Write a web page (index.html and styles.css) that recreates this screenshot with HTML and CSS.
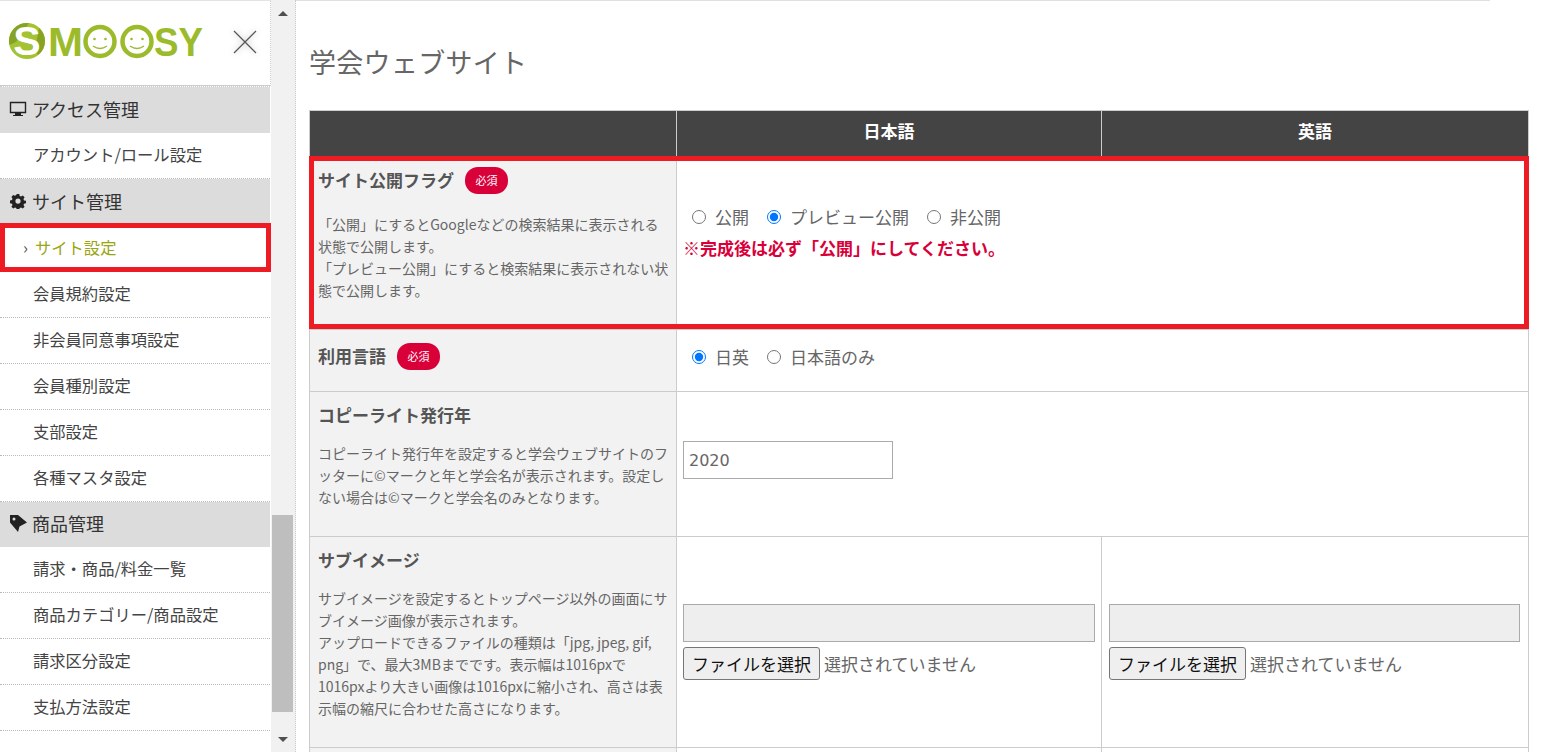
FILE: index.html
```html
<!DOCTYPE html>
<html lang="ja">
<head>
<meta charset="utf-8">
<title>学会ウェブサイト</title>
<link rel="stylesheet" href="styles.css">
</head>
<body>
<div class="app">
  <aside class="sidebar">
    <div class="brand">
      <svg class="logo" width="196" height="44" viewBox="0 0 196 44">
        <circle cx="19" cy="21" r="18" fill="#a3c332"/>
        <path d="M1.500 25 A18 18 0 0 1 21 3 L8 22Z" fill="#86a324"/>
        <path d="M30 35 A18 18 0 0 0 37 21 A18 18 0 0 0 31 8 L27 30Z" fill="#86a324"/>
        <text x="19" y="35" text-anchor="middle" class="logo-s">S</text>
        <text x="40" y="36" class="logo-t" textLength="35" lengthAdjust="spacingAndGlyphs">M</text>
        <circle cx="92" cy="21.500" r="14.500" fill="none" stroke="#9bbb2b" stroke-width="4.500"/>
        <circle cx="86.500" cy="19" r="1.300" fill="#9bbb2b"/><circle cx="97.500" cy="19" r="1.300" fill="#9bbb2b"/>
        <path d="M85 26 Q92 31 99 26" fill="none" stroke="#9bbb2b" stroke-width="1.300"/>
        <circle cx="129" cy="21.500" r="14.500" fill="none" stroke="#9bbb2b" stroke-width="4.500"/>
        <circle cx="123.500" cy="19" r="1.300" fill="#9bbb2b"/><circle cx="134.500" cy="19" r="1.300" fill="#9bbb2b"/>
        <path d="M122 26 Q129 31 136 26" fill="none" stroke="#9bbb2b" stroke-width="1.300"/>
        <text x="146" y="36" class="logo-t" textLength="49" lengthAdjust="spacingAndGlyphs">SY</text>
      </svg>
      <svg class="close" width="24" height="24" viewBox="0 0 24 24"><path d="M1 1L23 23M23 1L1 23" stroke="#555" stroke-width="1.200" fill="none"/></svg>
    </div>
    <nav class="nav">
      <div class="nav-head">
        <svg class="nav-icon" width="18" height="16" viewBox="0 0 18 16"><path d="M1.500 1.500H16.500V11.500H1.500Z" fill="none" stroke="#222" stroke-width="1.400"/><path d="M6 11.500H12V14H14V15H4V14H6Z" fill="#222"/></svg>
        アクセス管理
      </div>
      <a class="nav-item">アカウント/ロール設定</a>
      <div class="nav-head">
        <svg class="nav-icon" width="18" height="16" viewBox="0 0 16 16"><path fill="#222" d="M6.700 1h2.600l.4 2 1.300.6 1.800-1.100 1.800 1.800-1.100 1.800.5 1.300 2 .4v2.400l-2 .5-.5 1.200 1.100 1.800-1.800 1.800-1.800-1.100-1.300.5-.4 2H6.700l-.4-2-1.300-.5-1.800 1.100-1.800-1.800 1.100-1.800-.5-1.200-2-.5V7.400l2-.4.5-1.300-1.100-1.800 1.800-1.800L5 2.700l1.300-.6zM8 5.500a2.600 2.600 0 1 0 0 5.200 2.600 2.600 0 0 0 0-5.200z"/></svg>
        サイト管理
      </div>
      <a class="nav-item nav-item-active"><span class="chev">›</span>サイト設定</a>
      <a class="nav-item">会員規約設定</a>
      <a class="nav-item">非会員同意事項設定</a>
      <a class="nav-item">会員種別設定</a>
      <a class="nav-item">支部設定</a>
      <a class="nav-item">各種マスタ設定</a>
      <div class="nav-head nav-head-short">
        <svg class="nav-icon" width="18" height="18" viewBox="0 0 18 18"><path fill="#222" fill-rule="evenodd" d="M1 1H9L18 8.500L10.500 12.500L9 18L1 8.500ZM5 3.600a1.500 1.500 0 1 0 0 3 1.500 1.500 0 0 0 0-3z"/></svg>
        商品管理
      </div>
      <a class="nav-item">請求・商品/料金一覧</a>
      <a class="nav-item">商品カテゴリー/商品設定</a>
      <a class="nav-item">請求区分設定</a>
      <a class="nav-item">支払方法設定</a>
    </nav>
    <div class="mark mark-nav"></div>
  </aside>
  <div class="scrollbar">
    <span class="arrow-up"></span>
    <span class="thumb"></span>
    <span class="arrow-down"></span>
  </div>
  <main class="main">
    <div class="topline"></div>
    <h1 class="title">学会ウェブサイト</h1>
    <div class="table-wrap">
      <table class="form">
        <colgroup><col class="c1"><col class="c2"><col class="c3"></colgroup>
        <thead>
          <tr><th></th><th>日本語</th><th>英語</th></tr>
        </thead>
        <tbody>
          <tr class="r-flag">
            <th>
              <div class="label">サイト公開フラグ<span class="req">必須</span></div>
              <p class="desc desc-flag">「公開」にするとGoogleなどの検索結果に表示される状態で公開します。<br>「プレビュー公開」にすると検索結果に表示されない状態で公開します。</p>
            </th>
            <td colspan="2" class="td-flag">
              <div class="radios">
                <label><input type="radio" name="flag">公開</label>
                <label><input type="radio" name="flag" checked>プレビュー公開</label>
                <label><input type="radio" name="flag">非公開</label>
              </div>
              <p class="warn">※完成後は必ず「公開」にしてください。</p>
            </td>
          </tr>
          <tr class="r-lang">
            <th><div class="label label-flat">利用言語<span class="req">必須</span></div></th>
            <td colspan="2" class="td-lang">
              <div class="radios">
                <label><input type="radio" name="lang" checked>日英</label>
                <label><input type="radio" name="lang">日本語のみ</label>
              </div>
            </td>
          </tr>
          <tr class="r-copy">
            <th>
              <div class="label">コピーライト発行年</div>
              <p class="desc">コピーライト発行年を設定すると学会ウェブサイトのフッターに©マークと年と学会名が表示されます。設定しない場合は©マークと学会名のみとなります。</p>
            </th>
            <td colspan="2"><input class="year" type="text" value="2020"></td>
          </tr>
          <tr class="r-img">
            <th>
              <div class="label">サブイメージ</div>
              <p class="desc">サブイメージを設定するとトップページ以外の画面にサブイメージ画像が表示されます。<br>アップロードできるファイルの種類は「jpg, jpeg, gif, png」で、最大3MBまでです。表示幅は1016pxで1016pxより大きい画像は1016pxに縮小され、高さは表示幅の縮尺に合わせた高さになります。</p>
            </th>
            <td>
              <div class="preview"></div>
              <div class="file"><button class="file-btn" type="button">ファイルを選択</button><span>選択されていません</span></div>
            </td>
            <td class="td-en">
              <div class="preview"></div>
              <div class="file"><button class="file-btn" type="button">ファイルを選択</button><span>選択されていません</span></div>
            </td>
          </tr>
          <tr class="r-next"><th></th><td></td><td></td></tr>
        </tbody>
      </table>
      <div class="mark mark-row"></div>
    </div>
  </main>
</div>
</body>
</html>
```
FILE: styles.css
```css
* { box-sizing: border-box; }
html, body { margin: 0; height: 100%; overflow: hidden; background: #fff; }
body { font-family: "Noto Sans CJK JP", "Liberation Sans", sans-serif; color: #666; font-size: 16px; }
.app { display: flex; height: 752px; overflow: hidden; }

.sidebar { position: relative; width: 271px; flex: none; height: 752px; overflow: hidden; border-top: 1px solid #e4e4e4; }
.brand { height: 85px; display: flex; align-items: center; border-bottom: 1px solid #ccc; padding-left: 8px; padding-bottom: 2px; border-right: 1px dotted #ccc; }
.logo { flex: none; }
.logo-s { font: bold 41px "Liberation Sans", sans-serif; fill: #fff; }
.logo-t { font: bold 40px "Liberation Sans", sans-serif; fill: #9bbb2b; }
.close { flex: none; margin-left: 29px; filter: drop-shadow(0 0 3px rgba(0, 0, 0, .3)); }

.nav { border-top: 1px dotted #ccc; display: flex; flex-direction: column; width: 270px; }
.nav-head { height: 46px; background: #dcdcdc; display: flex; align-items: center; padding-left: 9px; padding-bottom: 3px; color: #333; font-size: 18px; flex: none; }
.nav-head-short { height: 45px; }
.nav-icon { flex: none; margin-right: 5px; }
.nav-item { height: 46px; display: flex; align-items: center; padding-left: 33px; padding-bottom: 3px; font-size: 16.300px; color: #444; border-bottom: 1px dotted #bbb; flex: none; }
.nav-item-active { color: #9aa514; padding-left: 23px; height: 47px; }
.chev { color: #555; width: 12px; flex: none; }

.mark { position: absolute; border: 5px solid #ed1c24; pointer-events: none; }
.mark-nav { left: 0; top: 222px; width: 271px; height: 49px; }
.mark-row { left: 0; top: 46px; width: 1220px; height: 173px; }

.scrollbar { flex: none; height: 752px; background: #f1f1f1; display: flex; flex-direction: column; align-items: center; border-right: 1px dotted #ccc; width: 25px; padding-right: 1px; }
.arrow-up, .arrow-down { width: 0; height: 0; border-left: 5px solid transparent; border-right: 5px solid transparent; flex: none; }
.arrow-up { border-bottom: 5px solid #505050; margin-top: 11px; }
.arrow-down { border-top: 5px solid #505050; margin-bottom: 7px; }
.thumb { width: 21px; height: 197px; background: #bebebe; margin-top: 499px; margin-bottom: 25px; }

.main { flex: 1; min-width: 0; padding: 0 22px 0 13px; }
.topline { height: 1px; background: #e0e0e0; margin: 0 39px 0 -13px; }
.title { margin: 42px 0 29px; font-size: 27px; font-weight: 400; line-height: 37px; height: 38px; color: #666; letter-spacing: 0.3px; }
.table-wrap { position: relative; }

.form { border-collapse: collapse; width: 1219px; table-layout: fixed; }
.c1 { width: 367px; }
.c2 { width: 425px; }
.c3 { width: 427px; }
.form th, .form td { border: 1px solid #ccc; padding: 0 6px; vertical-align: middle; text-align: left; font-weight: 400; }
.form tbody th { background: #f2f2f2; vertical-align: top; padding: 0 7px 0 8px; }
.form thead th { background: #444; color: #fff; text-align: center; font-weight: 700; height: 46px; font-size: 17px; padding-bottom: 6px; }
.r-flag { height: 173px; }
.r-lang { height: 62px; }
.r-copy { height: 145px; }
.r-img { height: 211px; }
.r-next { height: 30px; }
.label { font-weight: 700; font-size: 17px; color: #555; line-height: 28px; padding-top: 9px; display: flex; align-items: center; }
.label-flat { padding-top: 12px; }
.req { background: #d9003a; color: #fff; font-size: 11px; font-weight: 400; width: 43px; height: 27px; border-radius: 13px; display: inline-flex; align-items: center; justify-content: center; margin-left: 11px; flex: none; }
.desc { margin: 13px 0 0; font-size: 14px; line-height: 22px; color: #666; }
.desc-flag { margin-top: 19px; }
.td-flag { vertical-align: top !important; }
.td-lang { padding-bottom: 8px !important; }
.td-en { padding: 0 8px 0 7px !important; }
.radios { display: flex; padding-left: 9px; font-size: 17px; color: #666; }
.td-flag .radios { padding-top: 48px; }
.radios label { display: flex; align-items: center; margin-right: 18px; line-height: 24px; }
.radios input { margin: 0 9px 0 0; width: 14px; height: 14px; }
.warn { margin: 7px 0 0; color: #d9003a; font-weight: 700; font-size: 17px; line-height: 24px; }
.year { width: 210px; height: 38px; border: 1px solid #aaa; padding: 0 5px; font: 16px "DejaVu Sans", sans-serif; color: #666; display: block; margin-bottom: 8px; }
.preview { height: 38px; background: #eee; border: 1px solid #aaa; margin-top: 30px; }
.file { display: flex; align-items: center; margin-top: 5px; margin-bottom: 30px; font-size: 17px; color: #666; }
.file-btn { width: 137px; height: 33px; padding: 0; margin-right: 4px; font: 17px "Noto Sans CJK JP", sans-serif; color: #111; background: #efefef; border: 1px solid #767676; border-radius: 3px; }
```
